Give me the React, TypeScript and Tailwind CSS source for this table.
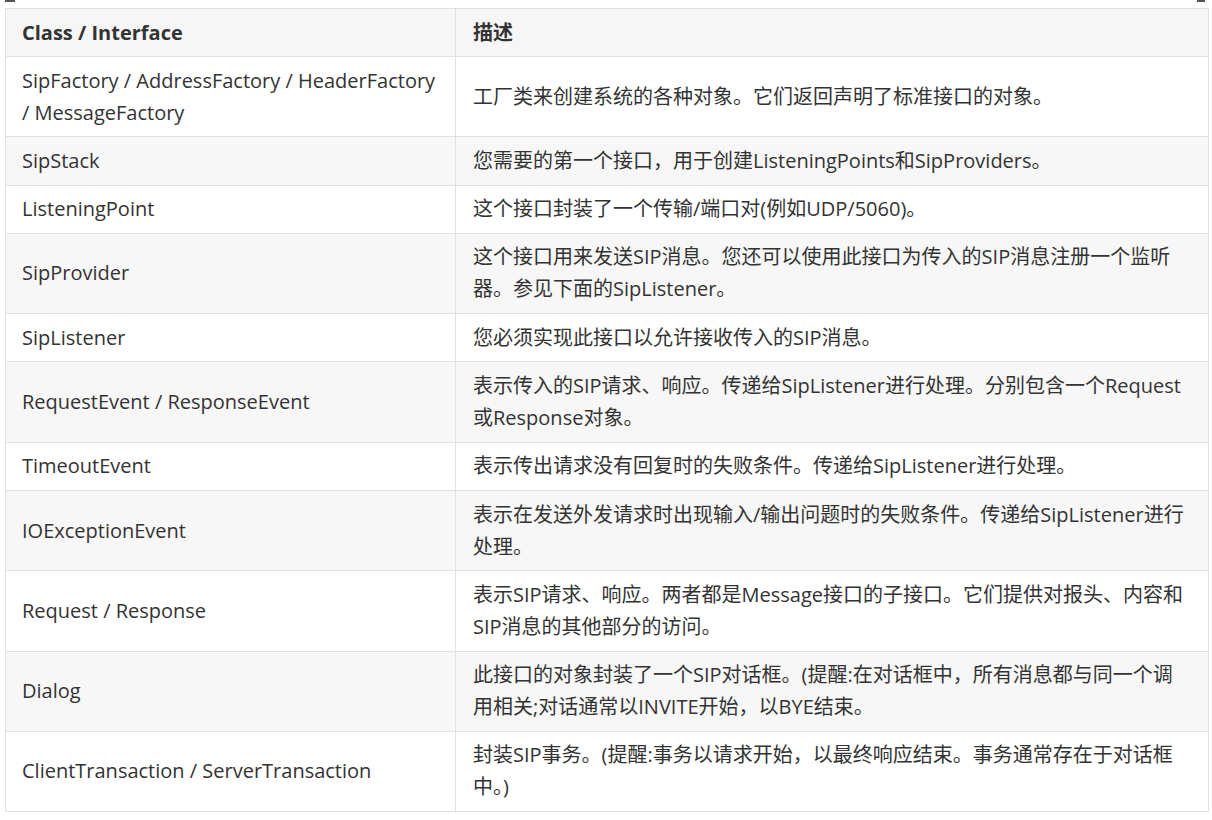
const rows: [string, string][] = [
  ["SipFactory / AddressFactory / HeaderFactory / MessageFactory", "工厂类来创建系统的各种对象。它们返回声明了标准接口的对象。"],
  ["SipStack", "您需要的第一个接口，用于创建ListeningPoints和SipProviders。"],
  ["ListeningPoint", "这个接口封装了一个传输/端口对(例如UDP/5060)。"],
  ["SipProvider", "这个接口用来发送SIP消息。您还可以使用此接口为传入的SIP消息注册一个监听器。参见下面的SipListener。"],
  ["SipListener", "您必须实现此接口以允许接收传入的SIP消息。"],
  ["RequestEvent / ResponseEvent", "表示传入的SIP请求、响应。传递给SipListener进行处理。分别包含一个Request或Response对象。"],
  ["TimeoutEvent", "表示传出请求没有回复时的失败条件。传递给SipListener进行处理。"],
  ["IOExceptionEvent", "表示在发送外发请求时出现输入/输出问题时的失败条件。传递给SipListener进行处理。"],
  ["Request / Response", "表示SIP请求、响应。两者都是Message接口的子接口。它们提供对报头、内容和SIP消息的其他部分的访问。"],
  ["Dialog", "此接口的对象封装了一个SIP对话框。(提醒:在对话框中，所有消息都与同一个调用相关;对话通常以INVITE开始，以BYE结束。"],
  ["ClientTransaction / ServerTransaction", "封装SIP事务。(提醒:事务以请求开始，以最终响应结束。事务通常存在于对话框中。)"],
];

function App() {
  return (
    <div className="w-[1212px] h-[820px] bg-white overflow-hidden relative font-['Open_Sans','Noto_Sans_CJK_SC',sans-serif] text-[#333] text-[20px]">
      <div className="absolute left-[5px] top-0 w-[10px] h-[2px] bg-[#555]" />
      <div className="absolute left-[1197px] top-0 w-[8px] h-[2px] bg-[#555]" />
      <div className="pl-[5px] pt-[8px]">
        <table className="border-collapse table-fixed w-[1203px]">
          <colgroup>
            <col className="w-[450px]" />
            <col className="w-[753px]" />
          </colgroup>
          <thead>
            <tr className="bg-[#f6f6f6]">
              <th className="border border-[#dfe2e5] text-left font-bold px-[16px] py-[7.5px] leading-[32px]">Class / Interface</th>
              <th className="border border-[#dfe2e5] text-left font-bold px-[17px] py-[7.5px] leading-[32px]">描述</th>
            </tr>
          </thead>
          <tbody>
            {rows.map(([name, desc], i) => (
              <tr key={name} className={i % 2 === 1 ? "bg-[#f7f7f7]" : "bg-white"}>
                <td className="border border-[#dfe2e5] px-[16px] py-[7.65px] leading-[32px] align-middle">{name}</td>
                <td className="border border-[#dfe2e5] px-[17px] py-[7.65px] leading-[32px] align-middle">{desc}</td>
              </tr>
            ))}
          </tbody>
        </table>
      </div>
    </div>
  );
}

export default App;
